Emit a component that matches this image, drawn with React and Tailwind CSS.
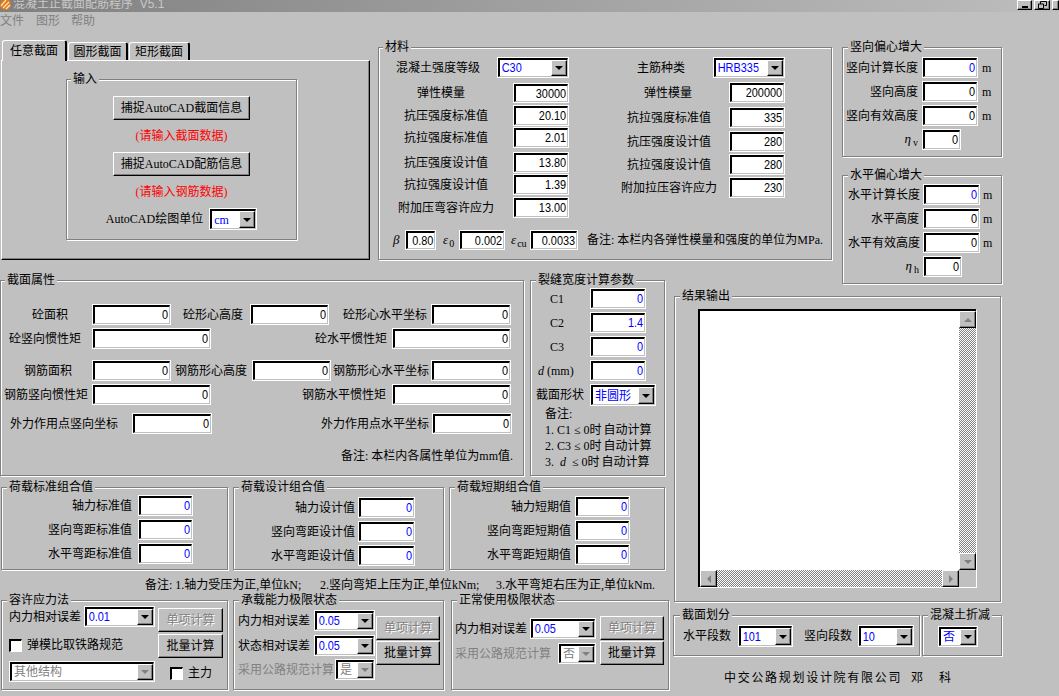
import React from "react";

const NUM = "font-['Liberation_Sans','Noto_Sans_CJK_SC',sans-serif] text-[13px]";

function Group({ title, className = "", legend = "left-[6px]", children }) {
  return (
    <div className={"relative box-border shrink-0 border border-[#808080] shadow-[1px_1px_0_#fff,inset_1px_1px_0_#fff] " + className}>
      <span className={"absolute -top-[8px] bg-[#c0c0c0] px-[2px] text-[12px] leading-[14px] whitespace-nowrap " + legend}>{title}</span>
      {children}
    </div>
  );
}

function Lbl({ className = "", children }) {
  return <div className={"shrink-0 whitespace-nowrap text-[12px] leading-[14px] " + className}>{children}</div>;
}

function Sunken({ className = "", children }) {
  return (
    <div className={"box-border shrink-0 border border-white " + className}>
      <div className="box-border flex h-full items-center overflow-hidden border-t-2 border-l-2 border-black border-r border-b border-r-[#c0c0c0] border-b-[#c0c0c0] bg-white">
        {children}
      </div>
    </div>
  );
}

function Input({ w, h = "h-[21px]", v = "0", blue, className = "" }) {
  return (
    <Sunken className={w + " " + h + " " + className}>
      <span className={"inline-block w-full origin-right scale-x-[0.84] pr-[1px] text-right " + NUM + (blue ? " text-[#0000ff]" : " text-black")}>{v}</span>
    </Sunken>
  );
}

function Arrow({ dis, dir = "down" }) {
  const fill = dis ? "#808080" : "#000";
  const pts = { down: "0,0 8,0 4,4", up: "0,4 8,4 4,0", left: "4,0 4,8 0,4", right: "0,0 0,8 4,4" }[dir];
  const box = dir === "left" || dir === "right" ? "0 0 4 8" : "0 0 8 4";
  const size = dir === "left" || dir === "right" ? { width: 4, height: 8 } : { width: 8, height: 4 };
  return (
    <svg viewBox={box} style={size}>
      <polygon points={pts} fill={fill} />
    </svg>
  );
}

function Raised({ className = "", children }) {
  return (
    <div className={"box-border flex shrink-0 items-center justify-center border-t border-l border-t-white border-l-white border-r border-b border-r-black border-b-black bg-[#c0c0c0] shadow-[inset_-1px_-1px_0_#808080] " + className}>
      {children}
    </div>
  );
}

function Combo({ w, h = "h-[21px]", v, dis, serif, cjk, className = "" }) {
  return (
    <Sunken className={w + " " + h + " " + className}>
      <span className={"flex-1 overflow-hidden whitespace-nowrap pl-[2px] " + (serif || cjk ? "text-[12px] " : "origin-left scale-x-[0.84] " + NUM + " ") + (dis ? "text-[#808080]" : "text-[#0000ff]")}>{v}</span>
      <Raised className="h-full w-[16px]"><Arrow dis={dis} /></Raised>
    </Sunken>
  );
}

function Btn({ w = "w-[65px]", h = "h-[24px]", dis, className = "", children }) {
  return (
    <Raised className={w + " " + h + " text-[12px] " + (dis ? "text-[#808080] [text-shadow:1px_1px_0_#fff] " : "") + className}>{children}</Raised>
  );
}

function Check({ className = "" }) {
  return <div className={"box-border h-[13px] w-[13px] shrink-0 border-t-2 border-l-2 border-black border-r border-b border-r-white border-b-white bg-white " + className} />;
}

function Tab({ active, className = "", children }) {
  return (
    <div className={"box-border flex items-center justify-center rounded-t-[3px] border-t border-l border-r-2 border-t-white border-l-white border-r-black bg-[#c0c0c0] text-[12px] " + (active ? "relative z-10 -mb-[1px] h-[21px] w-[65px] " : "h-[18px] w-[60px] ") + className}>
      {children}
    </div>
  );
}

function Sbtn({ dir, className = "" }) {
  return (
    <Raised className={"h-[17px] w-[17px] " + className}><Arrow dis dir={dir} /></Raised>
  );
}

const Track = "bg-[repeating-conic-gradient(#808080_0_25%,#ffffff_0_50%)] bg-[length:2px_2px]";

function Eta({ s }) {
  return <span className="font-['Liberation_Serif',serif] text-[13px]"><i>η</i><span className="ml-[2px] text-[10px] relative top-[3px]">{s}</span></span>;
}

function Eps({ s }) {
  return <span className="font-['Liberation_Serif',serif] text-[13px]"><i>ε</i><span className="ml-[1px] text-[10px] relative top-[3px]">{s}</span></span>;
}

function Note({ children }) {
  return <div className="whitespace-pre">{children}<span className="ml-[2px]">自动计算</span></div>;
}

export default function App() {
  return (
    <div className="flex h-[696px] w-[1059px] flex-col overflow-hidden bg-[#c0c0c0] font-['Liberation_Serif','Noto_Sans_CJK_SC',serif] text-[12px] leading-[14px] text-black">
      {/* title bar */}
      <div className="flex h-[12px] shrink-0 items-start overflow-hidden bg-gradient-to-r from-[#808080] via-[#a0a0a0] to-[#bdbdbd]">
        <svg viewBox="0 0 11 11" className="-mt-[1px] h-[11px] w-[11px] shrink-0">
          <circle cx="5.5" cy="5.5" r="5.5" fill="#e07a1a" />
          <path d="M1 7 L6 1 M3 9 L9 3 M6 10 L10 6" stroke="#ffe9c8" strokeWidth="1.2" />
        </svg>
        <span className="ml-[2px] -mt-[3px] whitespace-pre font-['Liberation_Sans','Noto_Sans_CJK_SC',sans-serif] text-[12px] text-[#c8c8c8]">混凝土正截面配筋程序  V5.1</span>
        <div className="ml-auto flex gap-[2px]">
          <Raised className="h-[10px] w-[15px] items-end pb-[1px]"><div className="h-[2px] w-[6px] bg-black" /></Raised>
          <Raised className="h-[10px] w-[16px]">
            <svg viewBox="0 0 9 8" className="h-[8px] w-[9px]"><path d="M2.5 .5H8.5V4.5H6.5M.5 3H5.5V7.5H.5Z M2.5 .5V3" fill="none" stroke="#000" /></svg>
          </Raised>
          <Raised className="h-[10px] w-[7px]" />
        </div>
      </div>
      {/* menu */}
      <div className="flex h-[18px] shrink-0 items-center text-[12px] text-[#808080]">
        <span className="w-[36px]">文件</span>
        <span className="w-[35px]">图形</span>
        <span>帮助</span>
      </div>

      {/* top row */}
      <div className="mt-[10px] flex h-[240px] shrink-0 items-start pl-[1px]">
        {/* tab control */}
        <div className="w-[369px] shrink-0">
          <div className="flex h-[20px] items-end pl-[1px]">
            <Tab active>任意截面</Tab>
            <Tab className="ml-[1px]">圆形截面</Tab>
            <Tab className="ml-[1px] w-[61px]">矩形截面</Tab>
          </div>
          <div className="box-border h-[200px] border-t border-l border-r border-b border-t-white border-l-white border-r-black border-b-black shadow-[inset_-1px_-1px_0_#808080] pl-[64px] pt-[18px]">
            <Group title="输入" legend="left-[4px]" className="flex h-[161px] w-[231px] flex-col items-center pt-[16px]">
              <Btn w="w-[137px]">捕捉AutoCAD截面信息</Btn>
              <div className="flex h-[32px] items-center text-[#ff0000]">(请输入截面数据)</div>
              <Btn w="w-[137px]">捕捉AutoCAD配筋信息</Btn>
              <div className="flex h-[32px] items-center text-[#ff0000]">(请输入钢筋数据)</div>
              <div className="flex h-[22px] items-center">
                <Lbl className="mr-[6px]">AutoCAD绘图单位</Lbl>
                <Combo w="w-[48px]" h="h-[22px]" v="cm" serif />
              </div>
            </Group>
          </div>
        </div>

        {/* material */}
        <Group title="材料" legend="left-[4px]" className="ml-[8px] mt-[7px] h-[213px] w-[454px] pt-[9px]">
          <div className="flex h-[161px]">
            <div className="w-[190px] shrink-0">
              <div className="flex items-center"><Lbl className="w-[118px] text-center">混凝土强度等级</Lbl><Combo w="w-[72px]" v="C30" /></div>
              <div className="mt-[5px] flex items-center"><Lbl className="w-[134px] pr-[10px] text-center">弹性模量</Lbl><Input w="w-[56px]" h="h-[20px]" v="30000" /></div>
              <div className="mt-[2px] flex items-center"><Lbl className="w-[134px] text-center">抗压强度标准值</Lbl><Input w="w-[56px]" v="20.10" /></div>
              <div className="mt-[1px] flex items-center"><Lbl className="w-[134px] text-center">抗拉强度标准值</Lbl><Input w="w-[56px]" v="2.01" /></div>
              <div className="mt-[4px] flex items-center"><Lbl className="w-[134px] text-center">抗压强度设计值</Lbl><Input w="w-[56px]" v="13.80" /></div>
              <div className="mt-[1px] flex items-center"><Lbl className="w-[134px] text-center">抗拉强度设计值</Lbl><Input w="w-[56px]" v="1.39" /></div>
              <div className="mt-[2px] flex items-center"><Lbl className="w-[134px] text-center">附加压弯容许应力</Lbl><Input w="w-[56px]" v="13.00" /></div>
            </div>
            <div className="ml-[40px] w-[176px] shrink-0">
              <div className="flex items-center"><Lbl className="w-[104px] text-center">主筋种类</Lbl><Combo w="w-[72px]" v="HRB335" /></div>
              <div className="mt-[4px] flex items-center"><Lbl className="w-[120px] pr-[2px] text-center">弹性模量</Lbl><Input w="w-[56px]" v="200000" /></div>
              <div className="mt-[4px] flex items-center"><Lbl className="w-[120px] text-center">抗拉强度标准值</Lbl><Input w="w-[56px]" v="335" /></div>
              <div className="mt-[3px] flex items-center"><Lbl className="w-[120px] text-center">抗压强度设计值</Lbl><Input w="w-[56px]" v="280" /></div>
              <div className="mt-[2px] flex items-center"><Lbl className="w-[120px] text-center">抗拉强度设计值</Lbl><Input w="w-[56px]" v="280" /></div>
              <div className="mt-[2px] flex items-center"><Lbl className="w-[120px] text-center">附加拉压容许应力</Lbl><Input w="w-[56px]" v="230" /></div>
            </div>
          </div>
          <div className="mt-[12px] flex h-[20px] items-center pl-[14px]">
            <span className="w-[12px] text-[13px] italic">β</span>
            <Input w="w-[31px]" h="h-[20px]" v="0.80" />
            <span className="w-[23px] pl-[7px]"><Eps s="0" /></span>
            <Input w="w-[46px]" h="h-[20px]" v="0.002" />
            <span className="w-[25px] pl-[6px]"><Eps s="cu" /></span>
            <Input w="w-[48px]" h="h-[20px]" v="0.0033" />
            <Lbl className="ml-[9px]">备注: 本栏内各弹性模量和强度的单位为MPa.</Lbl>
          </div>
        </Group>

        {/* right column */}
        <div className="ml-[10px] mt-[7px] w-[160px] shrink-0">
          <Group title="竖向偏心增大" legend="left-[5px]" className="h-[110px] w-[160px] pt-[9px]">
            <div className="flex items-center"><Lbl className="w-[79px] pr-[4px] text-right">竖向计算长度</Lbl><Input w="w-[56px]" blue /><span className="ml-[4px]">m</span></div>
            <div className="mt-[3px] flex items-center"><Lbl className="w-[79px] pr-[4px] text-right">竖向高度</Lbl><Input w="w-[56px]" /><span className="ml-[4px]">m</span></div>
            <div className="mt-[3px] flex items-center"><Lbl className="w-[79px] pr-[4px] text-right">竖向有效高度</Lbl><Input w="w-[56px]" /><span className="ml-[4px]">m</span></div>
            <div className="mt-[3px] flex items-center"><Lbl className="w-[79px] pr-[4px] text-right"><Eta s="v" /></Lbl><Input w="w-[39px]" /></div>
          </Group>
          <Group title="水平偏心增大" legend="left-[5px]" className="mt-[18px] h-[109px] w-[160px] pt-[8px]">
            <div className="flex items-center"><Lbl className="w-[80px] pr-[3px] text-right">水平计算长度</Lbl><Input w="w-[57px]" blue /><span className="ml-[3px]">m</span></div>
            <div className="mt-[3px] flex items-center"><Lbl className="w-[80px] pr-[4px] text-right">水平高度</Lbl><Input w="w-[57px]" /><span className="ml-[3px]">m</span></div>
            <div className="mt-[3px] flex items-center"><Lbl className="w-[80px] pr-[3px] text-right">水平有效高度</Lbl><Input w="w-[57px]" /><span className="ml-[3px]">m</span></div>
            <div className="mt-[3px] flex items-center"><Lbl className="w-[80px] pr-[4px] text-right"><Eta s="h" /></Lbl><Input w="w-[39px]" /></div>
          </Group>
        </div>
      </div>

      {/* lower row */}
      <div className="flex flex-1">
        <div className="w-[673px] shrink-0">
          <div className="flex">
            <Group title="截面属性" legend="left-[4px]" className="h-[196px] w-[524px] pt-[23px]">
              <div className="flex items-center">
                <Lbl className="w-[91px] pr-[24px] text-right">砼面积</Lbl><Input w="w-[79px]" />
                <Lbl className="w-[79px] pr-[7px] text-right">砼形心高度</Lbl><Input w="w-[79px]" />
                <Lbl className="w-[102px] pr-[4px] text-right">砼形心水平坐标</Lbl><Input w="w-[80px]" />
              </div>
              <div className="mt-[3px] flex items-center">
                <Lbl className="w-[91px] pr-[11px] text-right">砼竖向惯性矩</Lbl><Input w="w-[119px]" />
                <Lbl className="w-[181px] pr-[5px] text-right">砼水平惯性矩</Lbl><Input w="w-[119px]" />
              </div>
              <div className="mt-[11px] flex items-center">
                <Lbl className="w-[91px] pr-[20px] text-right">钢筋面积</Lbl><Input w="w-[79px]" />
                <Lbl className="w-[81px] pr-[5px] text-right">钢筋形心高度</Lbl><Input w="w-[79px]" />
                <Lbl className="w-[100px] pr-[2px] text-right">钢筋形心水平坐标</Lbl><Input w="w-[80px]" />
              </div>
              <div className="mt-[3px] flex items-center">
                <Lbl className="w-[91px] pr-[4px] text-right">钢筋竖向惯性矩</Lbl><Input w="w-[119px]" />
                <Lbl className="w-[181px] pr-[6px] text-right">钢筋水平惯性矩</Lbl><Input w="w-[119px]" />
              </div>
              <div className="mt-[8px] flex items-center">
                <Lbl className="w-[131px] pr-[14px] text-right">外力作用点竖向坐标</Lbl><Input w="w-[80px]" />
                <Lbl className="w-[220px] pr-[3px] text-right">外力作用点水平坐标</Lbl><Input w="w-[80px]" />
              </div>
              <Lbl className="mt-[15px] pr-[10px] text-right">备注: 本栏内各属性单位为mm值.</Lbl>
            </Group>

            <Group title="裂缝宽度计算参数" legend="left-[5px]" className="ml-[6px] h-[196px] w-[135px] pt-[7px]">
              <div className="flex items-center"><Lbl className="w-[59px] pl-[19px]">C1</Lbl><Input w="w-[56px]" blue /></div>
              <div className="mt-[3px] flex items-center"><Lbl className="w-[59px] pl-[19px]">C2</Lbl><Input w="w-[56px]" v="1.4" blue /></div>
              <div className="mt-[3px] flex items-center"><Lbl className="w-[59px] pl-[19px]">C3</Lbl><Input w="w-[56px]" blue /></div>
              <div className="mt-[3px] flex items-center"><Lbl className="w-[59px] pl-[7px]"><i>d</i> (mm)</Lbl><Input w="w-[56px]" blue /></div>
              <div className="mt-[3px] flex items-center"><Lbl className="w-[59px] pl-[5px]">截面形状</Lbl><Combo w="w-[66px]" h="h-[22px]" v="非圆形" cjk /></div>
              <div className="pl-[14px] leading-[16px]">
                <div>备注:</div>
                <Note>1. C1 ≤ 0时</Note>
                <Note>2. C3 ≤ 0时</Note>
                <Note>3.  <i>d</i>  ≤ 0时</Note>
              </div>
            </Group>
          </div>

          <div className="mt-[11px] flex pl-[1px]">
            <Group title="荷载标准组合值" legend="left-[5px]" className="h-[83px] w-[227px] pt-[7px]">
              <div className="flex items-center"><Lbl className="w-[136px] pr-[6px] text-right">轴力标准值</Lbl><Input w="w-[55px]" blue /></div>
              <div className="mt-[3px] flex items-center"><Lbl className="w-[136px] pr-[6px] text-right">竖向弯距标准值</Lbl><Input w="w-[55px]" blue /></div>
              <div className="mt-[3px] flex items-center"><Lbl className="w-[136px] pr-[6px] text-right">水平弯距标准值</Lbl><Input w="w-[55px]" blue /></div>
            </Group>
            <Group title="荷载设计组合值" legend="left-[5px]" className="ml-[5px] h-[83px] w-[211px] pt-[9px]">
              <div className="flex items-center"><Lbl className="w-[124px] pr-[3px] text-right">轴力设计值</Lbl><Input w="w-[57px]" blue /></div>
              <div className="mt-[3px] flex items-center"><Lbl className="w-[124px] pr-[3px] text-right">竖向弯距设计值</Lbl><Input w="w-[57px]" blue /></div>
              <div className="mt-[3px] flex items-center"><Lbl className="w-[124px] pr-[3px] text-right">水平弯距设计值</Lbl><Input w="w-[57px]" blue /></div>
            </Group>
            <Group title="荷载短期组合值" legend="left-[5px]" className="ml-[5px] h-[83px] w-[216px] pt-[8px]">
              <div className="flex items-center"><Lbl className="w-[125px] pr-[4px] text-right">轴力短期值</Lbl><Input w="w-[55px]" blue /></div>
              <div className="mt-[3px] flex items-center"><Lbl className="w-[125px] pr-[4px] text-right">竖向弯距短期值</Lbl><Input w="w-[55px]" blue /></div>
              <div className="mt-[3px] flex items-center"><Lbl className="w-[125px] pr-[4px] text-right">水平弯距短期值</Lbl><Input w="w-[55px]" blue /></div>
            </Group>
          </div>

          <div className="flex h-[30px] items-center pl-[145px] whitespace-nowrap">
            <span className="w-[175px]">备注: 1.轴力受压为正,单位kN;</span>
            <span className="w-[176px]">2.竖向弯矩上压为正,单位kNm;</span>
            <span>3.水平弯矩右压为正,单位kNm.</span>
          </div>

          <div className="flex pl-[1px]">
            <Group title="容许应力法" legend="left-[5px]" className="flex h-[90px] w-[227px]">
              <div className="w-[155px] shrink-0 pl-[7px] pt-[5px]">
                <div className="flex items-center"><Lbl className="w-[75px]">内力相对误差</Lbl><Combo w="w-[71px]" v="0.01" /></div>
                <div className="mt-[11px] flex items-center"><Check /><Lbl className="ml-[5px]">弹模比取铁路规范</Lbl></div>
                <Combo w="w-[146px]" v="其他结构" cjk dis className="mt-[9px]" />
              </div>
              <div className="ml-[1px] pt-[7px]">
                <Btn dis>单项计算</Btn>
                <Btn className="mt-[2px]">批量计算</Btn>
                <div className="ml-[12px] mt-[8px] flex items-center"><Check /><Lbl className="ml-[5px]">主力</Lbl></div>
              </div>
            </Group>
            <Group title="承载能力极限状态" legend="left-[5px]" className="ml-[5px] flex h-[90px] w-[211px]">
              <div className="w-[142px] shrink-0 pl-[4px] pt-[9px]">
                <div className="flex items-center"><Lbl className="w-[76px]">内力相对误差</Lbl><Combo w="w-[61px]" v="0.05" /></div>
                <div className="mt-[4px] flex items-center"><Lbl className="w-[76px]">状态相对误差</Lbl><Combo w="w-[61px]" v="0.05" /></div>
                <div className="mt-[3px] flex items-center"><Lbl className="w-[97px] text-[#808080]">采用公路规范计算</Lbl><Combo w="w-[40px]" v="是" cjk dis /></div>
              </div>
              <div className="pt-[15px]">
                <Btn w="w-[64px]" dis>单项计算</Btn>
                <Btn w="w-[64px]" className="mt-[1px]">批量计算</Btn>
              </div>
            </Group>
            <Group title="正常使用极限状态" legend="left-[5px]" className="ml-[7px] flex h-[90px] w-[218px]">
              <div className="w-[148px] shrink-0 pl-[3px] pt-[17px]">
                <div className="flex items-center"><Lbl className="w-[75px]">内力相对误差</Lbl><Combo w="w-[66px]" v="0.05" /></div>
                <div className="mt-[4px] flex items-center"><Lbl className="w-[103px] text-[#808080]">采用公路规范计算</Lbl><Combo w="w-[38px]" v="否" cjk dis /></div>
              </div>
              <div className="pt-[15px]">
                <Btn w="w-[64px]" dis>单项计算</Btn>
                <Btn w="w-[64px]" className="mt-[1px]">批量计算</Btn>
              </div>
            </Group>
          </div>
        </div>

        {/* right lower column */}
        <div className="w-[328px] shrink-0 pt-[16px]">
          <Group title="结果输出" legend="left-[5px]" className="ml-[1px] h-[306px] w-[327px] pl-[23px] pt-[12px]">
            <div className="box-border flex h-[278px] w-[278px] flex-col border-t-2 border-l-2 border-black shadow-[1px_1px_0_#fff]">
              <div className="flex min-h-0 flex-1">
                <div className="flex-1 bg-white" />
                <div className={"flex w-[17px] flex-col justify-between " + Track}>
                  <Sbtn dir="up" />
                  <Sbtn dir="down" />
                </div>
              </div>
              <div className="flex h-[17px]">
                <div className={"flex flex-1 justify-between " + Track}>
                  <Sbtn dir="left" />
                  <Sbtn dir="right" />
                </div>
                <div className="w-[17px]" />
              </div>
            </div>
          </Group>
          <div className="mt-[13px] flex">
            <Group title="截面划分" legend="left-[6px]" className="flex h-[41px] w-[247px] items-start pt-[9px]">
              <Lbl className="flex h-[22px] w-[64px] items-center pl-[9px]">水平段数</Lbl>
              <Combo w="w-[55px]" h="h-[22px]" v="101" />
              <Lbl className="ml-[11px] flex h-[22px] w-[54px] items-center">竖向段数</Lbl>
              <Combo w="w-[56px]" h="h-[22px]" v="10" />
            </Group>
            <Group title="混凝土折减" legend="left-[5px]" className="ml-[2px] h-[41px] w-[80px] pl-[15px] pt-[10px]">
              <Combo w="w-[40px]" v="否" cjk />
            </Group>
          </div>
          <div className="mt-[15px] whitespace-pre pl-[51px] tracking-[1.7px]">中交公路规划设计院有限公司<span className="ml-[9px]">邓   科</span></div>
        </div>
      </div>
    </div>
  );
}
